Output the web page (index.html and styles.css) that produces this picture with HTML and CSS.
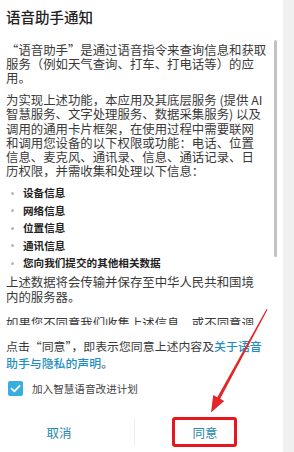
FILE: index.html
```html
<!DOCTYPE html>
<html lang="zh-CN">
<head>
<meta charset="utf-8">
<link rel="stylesheet" href="styles.css">
</head>
<body>
<div class="screen">
  <div class="dialog">
    <h1 class="title">语音助手通知</h1>
    <div class="scroll">
      <p class="p p1">“语音助手”是通过语音指令来查询信息和获取<br>服务（例如天气查询、打车、打电话等）的应<br>用。</p>
      <p class="p p2">为实现上述功能，本应用及其底层服务 (提供 AI<br>智慧服务、文字处理服务、数据采集服务) 以及<br>调用的通用卡片框架，在使用过程中需要联网<br>和调用您设备的以下权限或功能：电话、位置<br>信息、麦克风、通讯录、信息、通话记录、日<br>历权限，并需收集和处理以下信息：</p>
      <ul class="list">
        <li>设备信息</li>
        <li>网络信息</li>
        <li>位置信息</li>
        <li>通讯信息</li>
        <li>您向我们提交的其他相关数据</li>
      </ul>
      <p class="p p3">上述数据将会传输并保存至中华人民共和国境<br>内的服务器。</p>
      <p class="p p4">如果您不同意我们收集上述信息，或不同意调</p>
      <div class="thumb"></div>
    </div>
    <div class="footer">
      <p class="consent">点击“同意”，即表示您同意上述内容及<a class="link">关于语音<br>助手与隐私的声明</a>。</p>
      <label class="check">
        <span class="box"><svg width="15" height="15" viewBox="0 0 15 15"><rect width="15" height="15" rx="2" fill="#38ade2"/><path d="M3.6 7.6 L6.4 10.3 L11.6 4.8" fill="none" stroke="#fff" stroke-width="1.8" stroke-linecap="round" stroke-linejoin="round"/></svg></span>
        <span class="check-label">加入智慧语音改进计划</span>
      </label>
      <div class="actions">
        <button class="btn btn-cancel">取消</button>
        <span class="divider"></span>
        <button class="btn btn-ok">同意</button>
      </div>
    </div>
  </div>
  <div class="side"></div>
  <div class="highlight"></div>
  <svg class="arrow" width="294" height="452" viewBox="0 0 294 452">
    <polygon points="267.6,309.6 220.2,398.8 224.2,401.1 211,412.5 213.2,395.1 217.3,397.3 266.4,309.2" fill="#e3262a"/>
  </svg>
</div>
</body>
</html>
```
FILE: styles.css
```css
* { box-sizing: border-box; }
html, body { margin: 0; padding: 0; }
body {
  width: 294px;
  height: 452px;
  overflow: hidden;
  font-family: "Noto Sans CJK SC", "Noto Sans", sans-serif;
  color: #333;
  background: #fff;
}
.screen {
  position: relative;
  display: flex;
  width: 294px;
  height: 452px;
}
.dialog {
  width: 283px;
  height: 452px;
  background: #fff;
  display: flex;
  flex-direction: column;
}
.side {
  flex: 1;
  background: #f0f0f0;
}
.title {
  margin: 0;
  padding: 8px 6px 0;
  height: 40px;
  font-size: 14.5px;
  line-height: 18px;
  font-weight: 500;
  color: #222;
}
.scroll {
  position: relative;
  height: 285px;
  overflow: hidden;
  padding: 0 6px;
}
.p {
  margin: 0;
  font-size: 12.4px;
  white-space: nowrap;
  color: #3a3a3a;
}
.p1 { margin-top: 3px; line-height: 14px; }
.p2 { margin-top: 8px; line-height: 14.3px; }
.p3 { margin-top: 3.7px; line-height: 15px; }
.p4 { margin-top: 11px; line-height: 15px; }
.list {
  list-style: none;
  margin: 5.5px 0 0;
  padding: 0;
}
.list li {
  position: relative;
  height: 17.5px;
  line-height: 17.5px;
  padding-left: 17px;
  font-size: 10.6px;
  font-weight: bold;
  color: #222;
}
.list li::before {
  content: "";
  position: absolute;
  left: 5px;
  top: 7.5px;
  width: 3px;
  height: 3px;
  border-radius: 50%;
  background: #b8b8b8;
}
.thumb {
  position: absolute;
  left: 274px;
  top: 0;
  width: 3px;
  height: 217px;
  border-radius: 2px;
  background: #c2c2c2;
}
.footer {
  padding: 11.5px 6px 0;
}
.consent {
  margin: 0;
  font-size: 11.9px;
  line-height: 17px;
  white-space: nowrap;
  color: #3a3a3a;
}
.link {
  color: #1e8fc2;
  font-weight: 500;
}
.check {
  display: flex;
  align-items: center;
  gap: 9px;
  height: 16px;
  margin-top: 9.5px;
  padding-left: 2px;
}
.box { display: flex; width: 15px; height: 15px; }
.check-label {
  font-size: 10.6px;
  color: #444;
}
.actions {
  display: flex;
  align-items: center;
  height: 32px;
  margin: 20px 0 0 -6px;
}
.btn {
  border: 0;
  background: none;
  padding: 0;
  font-family: inherit;
  font-size: 12.5px;
  color: #2a88aa;
  height: 32px;
}
.btn-cancel { width: 118px; }
.divider {
  width: 1px;
  height: 28px;
  margin-left: 16px;
  background: #efefef;
}
.btn-ok { width: 140px; }
.highlight {
  position: absolute;
  left: 172px;
  top: 417px;
  width: 65px;
  height: 30px;
  border: 3px solid #e8161d;
  border-radius: 3px;
}
.arrow {
  position: absolute;
  left: 0;
  top: 0;
  pointer-events: none;
}
```
